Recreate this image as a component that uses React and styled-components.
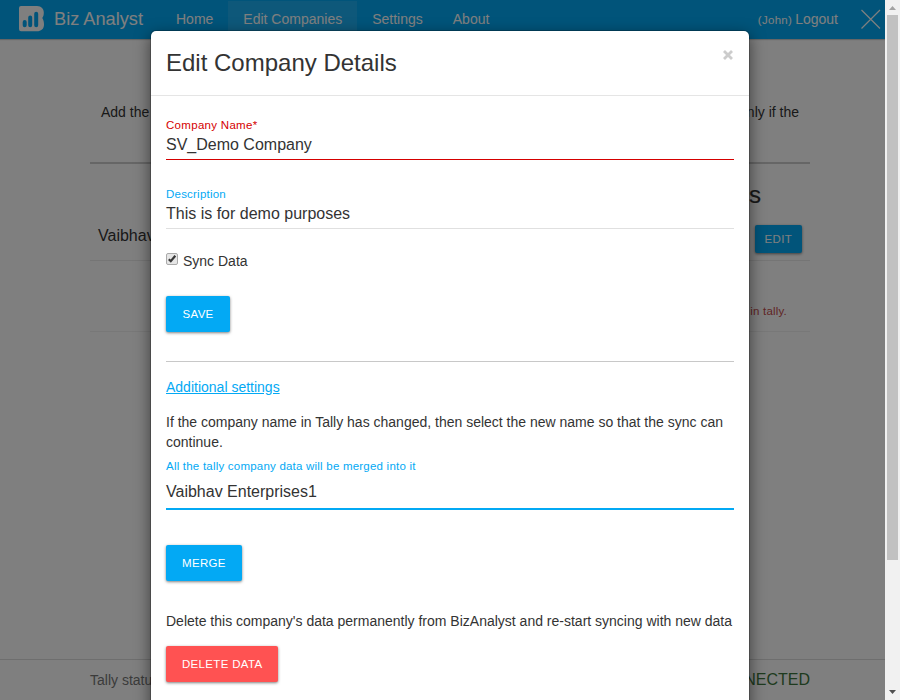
import React from "react";
import styled, { createGlobalStyle } from "styled-components";

const GlobalStyle = createGlobalStyle`
  * { box-sizing: border-box; }
  body {
    margin: 0;
    background: #fff;
    color: #333;
    font: 14px/20px "Liberation Sans", Arial, sans-serif;
  }
  p, h2, h4 { margin: 0; font-weight: 400; }
`;

const Screen = styled.div`
  position: relative;
  display: flex;
  width: 900px;
  height: 700px;
  overflow: hidden;
`;

const Page = styled.div`
  display: flex;
  flex-direction: column;
  width: 885px;
  height: 700px;
`;

const NavBar = styled.nav`
  display: flex;
  height: 39px;
  flex: none;
  background: #03a9f4;
  color: #fff;
  box-shadow: 0 1px 1px rgba(0, 0, 0, 0.2);
`;

const Brand = styled.div`
  display: flex;
  width: 161px;
  padding: 6px 0 0 19px;
  font-size: 18.200px;
  line-height: 27px;
  white-space: nowrap;
  svg { flex: none; margin-right: 9px; }
`;

const NavItem = styled.a`
  height: 38px;
  margin-top: 1px;
  padding: 8px 15px 0;
  background: ${(p) => (p.$active ? "rgba(255, 255, 255, 0.1)" : "transparent")};
`;

const Account = styled.div`
  display: flex;
  margin-left: auto;
  padding: 9px 4px 0 0;
  small { font-size: 11.500px; letter-spacing: 0.300px; margin: 1px 3px 0 0; }
  svg { margin: 0 0 0 22px; }
`;

const Content = styled.main`
  display: flex;
  flex-direction: column;
  flex: 1;
  width: 720px;
  margin-left: 90px;
`;

const Intro = styled.div`
  display: flex;
  justify-content: space-between;
  height: 125px;
  padding: 63px 11px 0;
  border-bottom: 2px solid #ccc;
`;

const ListTitle = styled.h2`
  height: 55px;
  padding: 17px 49px 0 0;
  font-size: 24px;
  line-height: 28px;
  text-align: right;
  -webkit-text-stroke: 0.200px #333;
`;

const CompanyRow = styled.div`
  display: flex;
  justify-content: space-between;
  height: 42px;
  padding: 6px 8px 0;
  border-bottom: 1px solid #eaeaea;
  font-size: 16px;
  span { line-height: 22px; }
`;

const ErrorRow = styled.div`
  height: 71px;
  padding: 40px 23px 0;
  border-bottom: 1px solid #f0f0f0;
  color: #c24a4a;
  font-size: 11.500px;
  letter-spacing: 0.200px;
  text-align: right;
`;

const StatusBar = styled.footer`
  display: flex;
  justify-content: space-between;
  height: 41px;
  flex: none;
  padding: 10px 75px 0 90px;
  border-top: 1px solid #ddd;
  background: #fff;
  color: #777;
  strong { color: #3c763d; font-size: 16px; font-weight: 400; }
`;

const Button = styled.button`
  height: ${(p) => (p.$small ? 28 : 36)}px;
  padding: 0 ${(p) => p.$pad || 16}px;
  border: 0;
  border-radius: 2px;
  background: ${(p) => (p.$danger ? "#ff5252" : "#03a9f4")};
  color: #fff;
  font: 11.500px "Liberation Sans", Arial, sans-serif;
  letter-spacing: 0.320px;
  white-space: nowrap;
  box-shadow: 0 1px 3px rgba(0, 0, 0, 0.5);
`;

const ScrollTrack = styled.div`
  display: flex;
  flex-direction: column;
  align-items: center;
  width: 15px;
  background: #f1f1f1;
`;

const ScrollArrow = styled.svg`
  width: 15px;
  height: 15px;
  flex: none;
  margin-top: ${(p) => (p.$end ? "auto" : "0")};
`;

const ScrollThumb = styled.div`
  width: 11px;
  height: 545px;
  background: #c1c1c1;
`;

const Backdrop = styled.div`
  position: absolute;
  inset: 0 15px 0 0;
  overflow: hidden;
  background: rgba(0, 0, 0, 0.5);
`;

const Dialog = styled.section`
  width: 600px;
  height: 760px;
  margin: 30px 0 0 150px;
  border: 1px solid rgba(0, 0, 0, 0.2);
  border-radius: 6px;
  background: #fff;
  background-clip: padding-box;
  box-shadow: 0 5px 15px rgba(0, 0, 0, 0.5);
`;

const DialogHeader = styled.header`
  display: flex;
  justify-content: space-between;
  height: 65px;
  padding: 15px 15px 0;
  border-bottom: 1px solid #e5e5e5;
  h4 { font-size: 24px; line-height: 34px; }
  svg { margin: 4px 1px 0 0; }
`;

const DialogBody = styled.div`
  display: flex;
  flex-direction: column;
  align-items: flex-start;
  padding: 20px 15px 0;
`;

const Field = styled.label`
  display: flex;
  flex-direction: column;
  width: 568px;
  height: ${(p) => p.$height}px;
  margin-bottom: ${(p) => p.$gap}px;
  border-bottom: ${(p) => p.$thick || 1}px solid ${(p) => p.$line};
`;

const FieldLabel = styled.span`
  color: ${(p) => (p.$required ? "#d50000" : "#03a9f4")};
  font-size: 11.500px;
  letter-spacing: ${(p) => (p.$required ? 0.300 : 0.215)}px;
  line-height: 18px;
`;

const FieldValue = styled.span`
  margin-top: ${(p) => p.$top || 0}px;
  font-size: 16px;
  line-height: 22px;
`;

const CheckRow = styled.label`
  display: flex;
  height: 20px;
  margin-bottom: 25px;
  svg { margin: 2px 5px 0 0; }
`;

const Divider = styled.div`
  width: 568px;
  height: 1px;
  margin: 29px 0 15px;
  background: #c8c8c8;
`;

const SettingsLink = styled.a`
  margin-bottom: 15px;
  color: #03a9f4;
  text-decoration: underline;
`;

const Paragraph = styled.p`
  width: 568px;
  margin: ${(p) => p.$top || 0}px 0 ${(p) => p.$gap}px;
`;

function Logo() {
  return (
    <svg width="26" height="26" viewBox="0 0 26 26">
      <path fill="#fff" d="M2 0H18C22.500 0 24.800 3 24.800 6.500C24.800 9 24.300 10.500 23.300 12C24.500 14 25 16 25 18.500C25 23 22 25.300 18 25.300H2Q0 25.300 0 23V2Q0 0 2 0Z" />
      <g stroke="#03a9f4" strokeWidth="4" strokeLinecap="round">
        <path d="M5.700 16V19.300M11.200 11.600V19.300M17.200 7.700V19.300" />
      </g>
    </svg>
  );
}

export default function App() {
  return (
    <>
      <GlobalStyle />
      <Screen>
        <Page>
          <NavBar>
            <Brand><Logo />Biz Analyst</Brand>
            <NavItem>Home</NavItem>
            <NavItem $active>Edit Companies</NavItem>
            <NavItem>Settings</NavItem>
            <NavItem>About</NavItem>
            <Account>
              <small>(John)</small>Logout
              <svg width="21" height="20" viewBox="0 0 21 20" stroke="#fff" strokeWidth="1.200">
                <path d="M1.500 1L20 19.500M20 1L1.500 19.500" />
              </svg>
            </Account>
          </NavBar>
          <Content>
            <Intro><span>Add the</span><span>only if the</span></Intro>
            <ListTitle>Companies</ListTitle>
            <CompanyRow><span>Vaibhav</span><Button $small $pad={10}>EDIT</Button></CompanyRow>
            <ErrorRow>in tally.</ErrorRow>
          </Content>
          <StatusBar><span>Tally status</span><strong>CONNECTED</strong></StatusBar>
        </Page>
        <ScrollTrack>
          <ScrollArrow viewBox="0 0 15 15"><path d="M4 10H11L7.500 6Z" fill="#a3a3a3" /></ScrollArrow>
          <ScrollThumb />
          <ScrollArrow $end viewBox="0 0 15 15"><path d="M4 5H11L7.500 9Z" fill="#505050" /></ScrollArrow>
        </ScrollTrack>
        <Backdrop>
          <Dialog>
            <DialogHeader>
              <h4>Edit Company Details</h4>
              <svg width="10" height="10" viewBox="0 0 10 10" stroke="#ccc" strokeWidth="2.800">
                <path d="M1 1L9 9M9 1L1 9" />
              </svg>
            </DialogHeader>
            <DialogBody>
              <Field $height={44} $gap={25} $line="#d50000">
                <FieldLabel $required>Company Name*</FieldLabel>
                <FieldValue>SV_Demo Company</FieldValue>
              </Field>
              <Field $height={44} $gap={22} $line="#e0e0e0">
                <FieldLabel>Description</FieldLabel>
                <FieldValue>This is for demo purposes</FieldValue>
              </Field>
              <CheckRow>
                <svg width="12" height="12" viewBox="0 0 12 12">
                  <rect x=".5" y=".5" width="11" height="11" rx="1.500" fill="#e6e6e6" stroke="#aaa" />
                  <path d="M2.800 6.200L4.800 8.200L9.300 2.800" fill="none" stroke="#383838" strokeWidth="2.200" />
                </svg>
                Sync Data
              </CheckRow>
              <Button $pad={16.5}>SAVE</Button>
              <Divider />
              <SettingsLink>Additional settings</SettingsLink>
              <Paragraph $gap={5}>
                If the company name in Tally has changed, then select the new name so that the sync can continue.
              </Paragraph>
              <Field $height={53} $gap={35} $thick={2} $line="#03a9f4">
                <FieldLabel>All the tally company data will be merged into it</FieldLabel>
                <FieldValue $top={6}>Vaibhav Enterprises1</FieldValue>
              </Field>
              <Button>MERGE</Button>
              <Paragraph $top={30} $gap={15}>
                Delete this company's data permanently from BizAnalyst and re-start syncing with new data
              </Paragraph>
              <Button $danger>DELETE DATA</Button>
            </DialogBody>
          </Dialog>
        </Backdrop>
      </Screen>
    </>
  );
}
